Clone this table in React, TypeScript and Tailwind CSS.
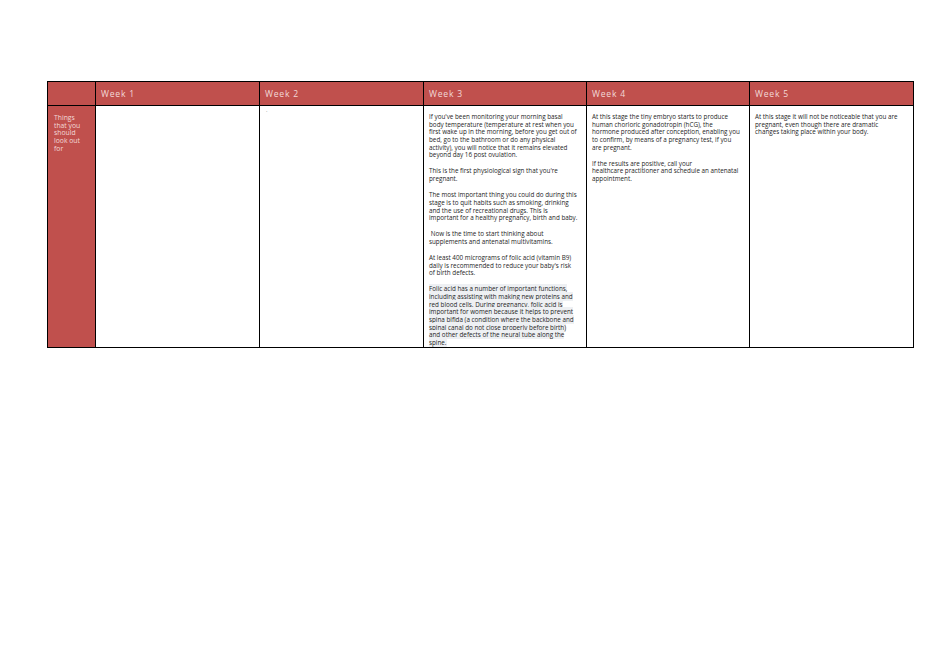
const week3 = [
  [
    "If you've been monitoring your morning basal",
    "body temperature (temperature at rest when you",
    "first wake up in the morning, before you get out of",
    "bed, go to the bathroom or do any physical",
    "activity), you will notice that it remains elevated",
    "beyond day 16 post ovulation.",
  ],
  ["This is the first physiological sign that you're", "pregnant."],
  [
    "The most important thing you could do during this",
    "stage is to quit habits such as smoking, drinking",
    "and the use of recreational drugs. This is",
    "important for a healthy pregnancy, birth and baby.",
  ],
  ["\u00a0Now is the time to start thinking about", "supplements and antenatal multivitamins."],
  [
    "At least 400 micrograms of folic acid (vitamin B9)",
    "daily is recommended to reduce your baby's risk",
    "of birth defects.",
  ],
]

const folic = [
  "Folic acid has a number of important functions,",
  "including assisting with making new proteins and",
  "red blood cells. During pregnancy, folic acid is",
  "important for women because it helps to prevent",
  "spina bifida (a condition where the backbone and",
  "spinal canal do not close properly before birth)",
  "and other defects of the neural tube along the",
  "spine.",
]

const week4 = [
  [
    "At this stage the tiny embryo starts to produce",
    "human chorloric gonadotropin (hCG), the",
    "hormone produced after conception, enabling you",
    "to confirm, by means of a pregnancy test, if you",
    "are pregnant.",
  ],
  [
    "If the results are positive, call your",
    "healthcare practitioner and schedule an antenatal",
    "appointment.",
  ],
]

const week5 = [
  [
    "At this stage it will not be noticeable that you are",
    "pregnant, even though there are dramatic",
    "changes taking place within your body.",
  ],
]

function Para({ lines, last }: { lines: string[]; last?: boolean }) {
  return (
    <p className={last ? "" : "mb-[8.4px]"}>
      {lines.map((l, i) => (
        <span key={i} className="block whitespace-nowrap">
          {l}
        </span>
      ))}
    </p>
  )
}

function Cell({ paras, children }: { paras?: string[][]; children?: React.ReactNode }) {
  return (
    <td className="border border-black align-top pl-[5px] pr-[2px] pt-[7px] pb-0 text-[6.3px] leading-[7.67px] text-[#262626] overflow-hidden">
      {paras?.map((p, i) => (
        <Para key={i} lines={p} last={i === paras.length - 1 && !children} />
      ))}
      {children}
    </td>
  )
}

export default function App() {
  const weeks = ["Week 1", "Week 2", "Week 3", "Week 4", "Week 5"]

  return (
    <div className="min-h-screen bg-white pt-[81px] pl-[47px]" style={{ fontFamily: '"Open Sans", "Noto Sans", sans-serif' }}>
      <table className="table-fixed border-collapse w-[866px]">
        <colgroup>
          <col className="w-[48px]" />
          <col className="w-[164px]" />
          <col className="w-[164px]" />
          <col className="w-[163px]" />
          <col className="w-[163px]" />
          <col className="w-[164px]" />
        </colgroup>
        <thead>
          <tr className="h-[24px]">
            <th className="border border-black bg-[#c0504d]" />
            {weeks.map((w) => (
              <th
                key={w}
                className="border border-black bg-[#c0504d] text-left font-normal text-[8.6px] leading-[12px] tracking-[0.8px] text-[#f3d9d8] pl-[5px]"
              >
                {w}
              </th>
            ))}
          </tr>
        </thead>
        <tbody>
          <tr>
            <td className="border border-black bg-[#c0504d] align-top pl-[6px] pr-[9px] pt-[8px] text-[6.8px] leading-[7.7px] text-[#f3d9d8]">
              Things that you should look out for
            </td>
            <Cell />
            <td className="border border-black align-top pl-[6px] pt-[1px] text-[5.6px] leading-[7px] text-[#777]">.</td>
            <Cell paras={week3}>
              <p>
                {folic.map((l, i) => (
                  <span key={i} className="block">
                    <span className="bg-[#eef0f3] whitespace-nowrap">{l}</span>
                  </span>
                ))}
              </p>
            </Cell>
            <Cell paras={week4} />
            <Cell paras={week5} />
          </tr>
        </tbody>
      </table>
    </div>
  )
}
